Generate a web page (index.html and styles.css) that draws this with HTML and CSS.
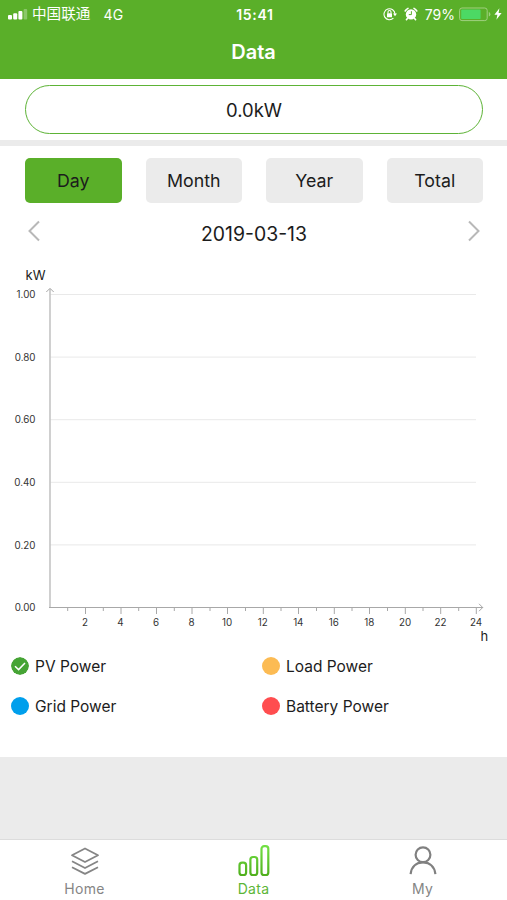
FILE: index.html
```
<!DOCTYPE html>
<html lang="en">
<head>
    <meta charset="UTF-8">
    <meta name="viewport" content="width=device-width, initial-scale=1.0">
    <title>Data</title>
    <link rel="stylesheet" href="styles.css">
</head>
<body>
    <header class="header">
        <div class="status-bar">
            <div class="status-left">
                <svg class="signal" width="20" height="12" viewBox="0 0 20 12" fill="#fff">
                    <rect x="0" y="7" width="4" height="4.4" rx="1"/>
                    <rect x="5.2" y="5.2" width="4" height="6.2" rx="1"/>
                    <rect x="10.4" y="3" width="4" height="8.4" rx="1"/>
                    <rect x="15.6" y="1" width="3.6" height="10.4" rx="1" opacity="0.3"/>
                </svg>
                <span class="carrier">中国联通</span>
                <span class="network">4G</span>
            </div>
            <div class="time">15:41</div>
            <div class="status-right">
                <svg class="lock" width="15" height="14" viewBox="0 0 15 14" fill="none" stroke="#fff" stroke-width="1.1">
                    <path d="M10.4 11.2A5.5 5.5 0 1 1 12 7"/>
                    <path d="M10 6.6h4l-2 2.6z" fill="#fff" stroke="none"/>
                    <rect x="4" y="6.2" width="5" height="4" rx="0.5" fill="#fff" stroke="none"/>
                    <path d="M5 6.5V5a1.5 1.5 0 0 1 3 0v1.5"/>
                </svg>
                <svg class="alarm" width="14" height="14" viewBox="0 0 14 14">
                    <circle cx="7" cy="7.4" r="5.2" fill="#fff"/>
                    <path d="M1.2 4A7 7 0 0 1 4 1.4M12.8 4A7 7 0 0 0 10 1.4M3.4 11.4l-1 1.3M10.6 11.4l1 1.3" stroke="#fff" stroke-width="1.6" stroke-linecap="round" fill="none"/>
                    <path d="M7.4 4.2v3.4H4.8" stroke="#5aaf29" stroke-width="1" fill="none"/>
                </svg>
                <span class="percent">79%</span>
                <svg class="battery" width="33" height="15" viewBox="0 0 33 15">
                    <rect x="0.6" y="1" width="27.6" height="12.6" rx="2.4" fill="none" stroke="#a0d080" stroke-width="1"/>
                    <rect x="2.2" y="2.6" width="19.4" height="9.4" rx="0.8" fill="#4cd964"/>
                    <path d="M29.8 5v4.6q1.6-.6 1.6-2.3T29.8 5z" fill="#a0d080"/>
                </svg>
                <svg class="bolt" width="8" height="14" viewBox="0 0 8 14">
                    <path d="M5.4 1.2L.4 7.8h3L2.4 12.8 7.6 6H4.6z" fill="#fff"/>
                </svg>
            </div>
        </div>
        <h1 class="title">Data</h1>
    </header>

    <section class="power">
        <div class="power-value">0.0kW</div>
    </section>

    <main class="content">
        <div class="tabs">
            <button class="tab active">Day</button>
            <button class="tab">Month</button>
            <button class="tab">Year</button>
            <button class="tab">Total</button>
        </div>

        <div class="date-row">
            <svg class="arrow" width="14" height="22" viewBox="0 0 14 22">
                <path d="M12 1.5L2.5 11l9.5 9.5"/>
            </svg>
            <span class="date">2019-03-13</span>
            <svg class="arrow" width="14" height="22" viewBox="0 0 14 22">
                <path d="M2 1.5l9.5 9.5L2 20.5"/>
            </svg>
        </div>

        <svg class="chart" width="507" height="390" viewBox="0 255 507 390">
            <!-- grid -->
            <path class="grid" d="M50 294.5H476M50 357.1H476M50 419.7H476M50 482.3H476M50 544.9H476"/>
            <!-- axes -->
            <path class="axis-y" d="M50 608V289"/>
            <path class="axis-x" d="M49 607.5H483"/>
            <path class="axis-arrow" d="M46.3 292L50 288.3 53.7 292M479 603.8l3.7 3.7-3.7 3.7"/>
            <path class="ticks" d="M85.5 608v6M121 608v6M156.5 608v6M192 608v6M227.5 608v6M263.3 608v6M298.5 608v6M334.3 608v6M369.5 608v6M405.3 608v6M440.7 608v6M476.3 608v6"/>
            <path class="ticks" d="M67.7 608v3M103.3 608v3M138.7 608v3M174.3 608v3M210 608v3M245.5 608v3M281 608v3M316.5 608v3M352 608v3M387.5 608v3M423 608v3M458.7 608v3"/>

            <g class="y-labels">
                <text x="35.5" y="298">1.00</text>
                <text x="35.5" y="361">0.80</text>
                <text x="35.5" y="423.4">0.60</text>
                <text x="35.5" y="486">0.40</text>
                <text x="35.5" y="548.6">0.20</text>
                <text x="35.5" y="611.4">0.00</text>
            </g>
            <g class="x-labels">
                <text x="85" y="626">2</text>
                <text x="120.5" y="626">4</text>
                <text x="156" y="626">6</text>
                <text x="191.5" y="626">8</text>
                <text x="227" y="626">10</text>
                <text x="262.8" y="626">12</text>
                <text x="298.3" y="626">14</text>
                <text x="333.8" y="626">16</text>
                <text x="369.3" y="626">18</text>
                <text x="405" y="626">20</text>
                <text x="440.5" y="626">22</text>
                <text x="476" y="626">24</text>
            </g>
            <text class="unit" x="25.5" y="279.5">kW</text>
            <text class="unit" x="480.5" y="640.5">h</text>
        </svg>

        <div class="legend">
            <div class="legend-item">
                <svg class="dot" width="18" height="18" viewBox="0 0 18 18">
                    <circle cx="9" cy="9" r="9" fill="#46a435"/>
                    <path d="M4 9.2l3.6 3.4L14 6" fill="none" stroke="#fff" stroke-width="1.5"/>
                </svg>
                <span>PV Power</span>
            </div>
            <div class="legend-item">
                <span class="dot load"></span>
                <span>Load Power</span>
            </div>
            <div class="legend-item">
                <span class="dot grid-power"></span>
                <span>Grid Power</span>
            </div>
            <div class="legend-item">
                <span class="dot battery-power"></span>
                <span>Battery Power</span>
            </div>
        </div>
    </main>

    <nav class="nav">
        <a class="nav-item">
            <svg width="34" height="34" viewBox="0 0 34 34" fill="none" stroke="#858585" stroke-width="1.8" stroke-linejoin="round">
                <path d="M17 4.5L30 11.3 17 18 4 11.3z"/>
                <path d="M4 17.3L17 24l13-6.7M4 23.2l13 6.7 13-6.7"/>
            </svg>
            <span>Home</span>
        </a>
        <a class="nav-item active">
            <svg width="34" height="34" viewBox="0 0 34 34" fill="none" stroke="url(#bars)" stroke-width="2.2">
                <defs>
                    <linearGradient id="bars" gradientUnits="userSpaceOnUse" x1="0" y1="2" x2="0" y2="32">
                        <stop offset="0" stop-color="#72e044"/>
                        <stop offset="1" stop-color="#4fae1c"/>
                    </linearGradient>
                </defs>
                <rect x="2.5" y="18.7" width="6.6" height="12.3" rx="2.6"/>
                <rect x="13.4" y="13" width="6.8" height="18" rx="2.6"/>
                <rect x="24.5" y="2.2" width="6.8" height="28.8" rx="2.6"/>
            </svg>
            <span>Data</span>
        </a>
        <a class="nav-item">
            <svg width="34" height="34" viewBox="0 0 34 34" fill="none" stroke="#808080" stroke-width="2.2">
                <circle cx="17" cy="10.8" r="7.4"/>
                <path d="M4.6 30.2C5.4 22.8 10.2 18.4 17 18.4S28.6 22.8 29.4 30.2"/>
            </svg>
            <span>My</span>
        </a>
    </nav>
</body>
</html>
```
FILE: styles.css
```
* {
    box-sizing: border-box;
}

body {
    margin: 0;
    width: 507px;
    height: 900px;
    display: flex;
    flex-direction: column;
    font-family: Inter, "Noto Sans CJK SC", sans-serif;
    color: #1c1c1c;
    background-color: #ebebeb;
    overflow: hidden;
}

.header {
    height: 79px;
    color: white;
    background-color: #5aaf29;
}

.status-bar {
    display: grid;
    grid-template-columns: 1fr auto 1fr;
    align-items: center;
    height: 28px;
    padding: 0 5px 0 8px;
    font-size: 14px;
}

.status-left,
.status-right {
    display: flex;
    align-items: center;
}

.status-right {
    justify-content: flex-end;
}

.carrier {
    margin-left: 4px;
    font-size: 14.6px;
    line-height: 20px;
}

.network {
    margin-left: 13px;
    letter-spacing: 0.2px;
}

.time {
    font-weight: 600;
    letter-spacing: 0.7px;
}

.lock {
    margin-right: 6px;
}

.percent {
    margin: 0 4px 0 7px;
}

.battery {
    margin-right: 2px;
}

.title {
    margin: 12px 0 0;
    font-size: 20px;
    font-weight: 600;
    line-height: 25px;
    text-align: center;
}

.power {
    height: 67px;
    padding: 6px 24px 0 25px;
    background-color: white;
    border-bottom: 6px solid #ebebeb;
}

.power-value {
    height: 49px;
    border: 1px solid #5db336;
    border-radius: 25px;
    font-size: 18.5px;
    line-height: 48px;
    text-align: center;
}

.content {
    height: 611px;
    background-color: white;
}

.tabs {
    display: grid;
    grid-template-columns: repeat(4, 1fr);
    gap: 24px;
    padding: 12px 24px 0 25px;
}

.tab {
    height: 45px;
    padding: 0;
    border: none;
    border-radius: 5px;
    font-family: inherit;
    font-size: 17.8px;
    color: #1c1c1c;
    background-color: #ebebeb;
}

.tab.active {
    background-color: #5aaf29;
}

.date-row {
    display: flex;
    justify-content: space-between;
    height: 52px;
    padding: 17px 26px 0 27px;
}

.date {
    font-size: 19.4px;
    line-height: 28px;
}

.arrow {
    fill: none;
    stroke: #b8b8b8;
    stroke-width: 2;
}

.chart {
    display: block;
}

.grid {
    stroke: #e9e9e9;
}

.axis-y {
    stroke: #c4c4c4;
    stroke-width: 1.6;
}

.axis-x,
.axis-arrow,
.ticks {
    fill: none;
    stroke: #a8a8a8;
}

.y-labels,
.x-labels {
    font-size: 9.8px;
    fill: #333;
}

.y-labels {
    text-anchor: end;
}

.x-labels {
    text-anchor: middle;
}

.unit {
    font-size: 13px;
    fill: #1c1c1c;
}

.legend {
    display: grid;
    grid-template-columns: 251px 1fr;
    grid-auto-rows: 40px;
    padding: 1px 0 0 11px;
}

.legend-item {
    display: flex;
    align-items: center;
    gap: 6px;
    font-size: 15.5px;
}

.dot {
    width: 18px;
    height: 18px;
    border-radius: 50%;
}

.load {
    background-color: #fcbb53;
}

.grid-power {
    background-color: #009fec;
}

.battery-power {
    background-color: #ff4d4f;
}

.nav {
    display: grid;
    grid-template-columns: repeat(3, 1fr);
    height: 61px;
    margin-top: auto;
    border-top: 1px solid #dcdcdc;
    background-color: white;
}

.nav-item {
    display: flex;
    flex-direction: column;
    align-items: center;
    padding-top: 4px;
    font-size: 14px;
    line-height: 21px;
    letter-spacing: 0.3px;
    color: #858585;
}

.nav-item.active {
    color: #5cb637;
}
```
